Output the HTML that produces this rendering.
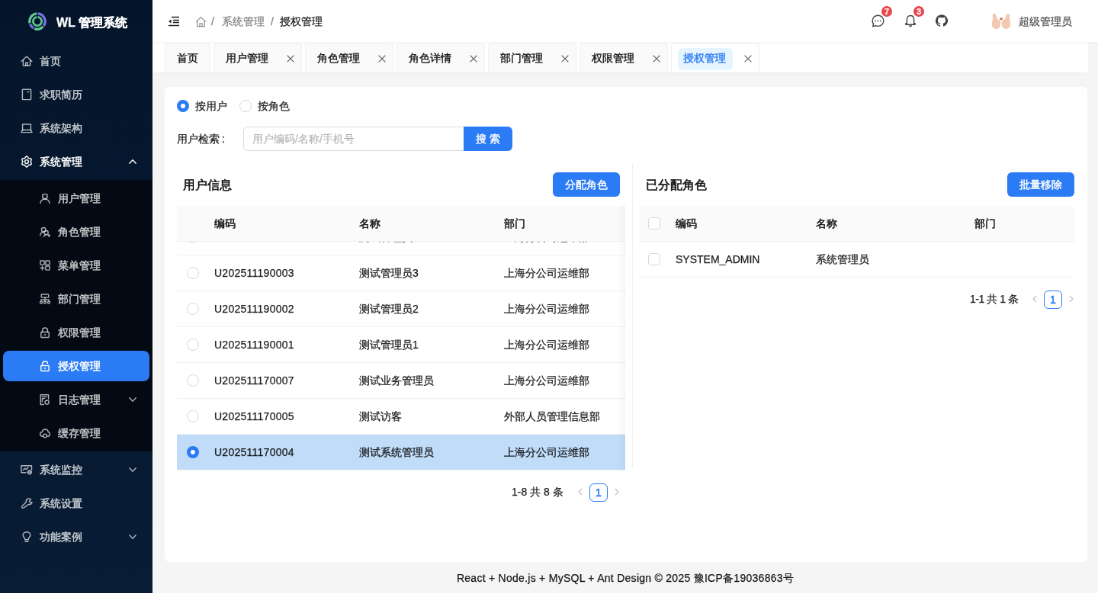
<!DOCTYPE html>
<html><head><meta charset="utf-8">
<style>
html,body{margin:0;padding:0;width:1098px;height:593px;overflow:hidden;background:#f5f5f5}
*{box-sizing:border-box}
#root{will-change:transform;-webkit-text-stroke:0.25px currentColor;position:absolute;left:0;top:0;width:1440px;height:778px;transform:scale(0.7625);transform-origin:0 0;font-family:"Liberation Sans",sans-serif;font-size:14px;color:rgba(0,0,0,0.88);background:#f5f5f5;overflow:hidden}
.abs{position:absolute}
.t{position:absolute;white-space:nowrap;line-height:22px;height:22px}
/* sidebar */
#side{position:absolute;left:0;top:0;width:200px;height:778px;background:linear-gradient(#04152b,#081c35)}
#sub{position:absolute;left:0;top:236px;width:200px;height:356px;background:#030a13}
.mi{position:absolute;left:4px;width:192px;height:40px;line-height:40px;color:rgba(255,255,255,0.67);font-size:14px;-webkit-text-stroke:0.45px currentColor}
.mi .ic{position:absolute;top:13px;width:14px;height:14px}
.mi .tx{position:absolute;top:0;white-space:nowrap}
.mi.top .ic{left:24px}.mi.top .tx{left:48px}
.mi.s .ic{left:48px}.mi.s .tx{left:72px}
.mi .ar{position:absolute;left:164.5px;top:16px;width:10px;height:8px}
.mi.open{color:#fff}
.mi.sel{background:#2b7bf4;border-radius:8px;color:#fff}
/* header */
#hdr{position:absolute;left:200px;top:0;width:1240px;height:55px;background:#fff;box-shadow:0 1px 3px rgba(0,0,0,0.06);z-index:2}
#tabs{position:absolute;left:200px;top:55px;width:1227px;height:40px;background:#fff;box-shadow:0 3px 5px rgba(0,0,0,0.025)}
.tab{-webkit-text-stroke:0.4px currentColor;position:absolute;top:2px;height:38px;background:#fafafa;border:1px solid #f0f0f0;border-bottom:none;border-radius:3px 3px 0 0;line-height:36px;font-size:14px;color:rgba(0,0,0,0.88)}
.badge{width:14px;height:14px;border-radius:7px;background:#e8474c;color:#fff;font-size:11px;line-height:14px;text-align:center;font-weight:bold;box-shadow:0 0 0 1px #fff}
.tab .x{position:absolute;left:94.5px;top:14px;width:10px;height:10px}
.tab.act{background:#fff}
.hl{left:8px;top:5px;width:72px;height:29px;background:#e6f4ff;border-radius:6px}
.inp{border:1px solid #d9d9d9;border-radius:6px 0 0 6px;background:#fff}
.ttl{font-size:16px;-webkit-text-stroke:0.6px currentColor;line-height:24px;height:24px}
.hd{-webkit-text-stroke:0.5px currentColor}
.row.sel{background:#c0dcf8}
.card{position:absolute;left:216px;top:114px;width:1209.5px;height:623px;background:#fff;border-radius:6px}
.th{position:absolute;height:47px;background:#fafafa;border-bottom:1px solid #f0f0f0;border-radius:2px 2px 0 0}
.row{position:absolute;height:47px;border-bottom:1px solid #f0f0f0}
.btn{-webkit-text-stroke:0.4px currentColor;position:absolute;height:32px;background:#2b7bf4;color:#fff;border-radius:6px;text-align:center;line-height:32px;font-size:14px}
.radio{position:absolute;width:16px;height:16px;border-radius:50%;border:1px solid #d9d9d9;background:#fff}
.radio.on{border:5px solid #2b7bf4}
.cb{position:absolute;width:16px;height:16px;border-radius:4px;border:1px solid #d9d9d9;background:#fff}
.pg{position:absolute;width:24px;height:24px;border:1px solid #2b7bf4;border-radius:6px;color:#2b7bf4;text-align:center;line-height:22px;font-size:14px;-webkit-text-stroke:0.6px currentColor}
.chev{position:absolute;color:rgba(0,0,0,0.25)}
</style></head>
<body><div id="root">

<div id="side">
  <div id="sub"></div>
  <!-- logo -->
  <svg class="abs" style="left:37px;top:16px" width="24" height="24" viewBox="0 0 24 24">
    <path d="M2.10 14.47 A10.2 10.2 0 0 1 11.29 1.82" fill="none" stroke="#62c792" stroke-width="3.3"/>
    <path d="M12.71 1.82 A10.2 10.2 0 0 1 20.25 18.00" fill="none" stroke="#7174e0" stroke-width="3.3"/>
    <path d="M19.46 18.96 A10.2 10.2 0 0 1 8.18 21.46" fill="none" stroke="#62c792" stroke-width="3.3"/>
    <path d="M7.05 20.92 A10.2 10.2 0 0 1 2.48 15.66" fill="none" stroke="#7174e0" stroke-width="3.3"/>
    <path d="M12.59 6.43 A5.6 5.6 0 1 1 11.41 6.43" fill="none" stroke="#5dbf8a" stroke-width="2.8"/>
  </svg>
  <div class="t" style="left:74px;top:18.5px;color:#fff;font-size:16px;font-weight:bold;-webkit-text-stroke:0.3px #fff">WL 管理系统</div>

  <div class="mi top" style="top:60px"><svg class="ic" viewBox="0 0 14 14" style="overflow:visible"><g fill="none" stroke="currentColor" stroke-width="1.45" stroke-linejoin="round" stroke-linecap="round"><path d="M0.2 7.4 L7 0.9 L13.8 7.4"/><path d="M2.4 5.6 V13 H11.6 V5.6"/><path d="M5.7 13 V9.3 H8.3 V13"/></g></svg><span class="tx">首页</span></div>
  <div class="mi top" style="top:104px"><svg class="ic" viewBox="0 0 14 14" style="overflow:visible"><g fill="none" stroke="currentColor" stroke-width="1.45" stroke-linejoin="round" stroke-linecap="round"><rect x="1.4" y="0.2" width="11.2" height="13.4" rx="0.8"/><path d="M7.6 3.6 H10"/></g></svg><span class="tx">求职简历</span></div>
  <div class="mi top" style="top:148px"><svg class="ic" viewBox="0 0 14 14" style="overflow:visible"><g fill="none" stroke="currentColor" stroke-width="1.45" stroke-linejoin="round" stroke-linecap="round"><path d="M1.6 9.4 V1.9 H12.4 V9.4"/><path d="M0 12.6 H14 L12.4 9.4 H1.6 Z"/></g></svg><span class="tx">系统架构</span></div>
  <div class="mi top open" style="top:192px"><svg class="ic" viewBox="0 0 14 14" style="overflow:visible"><g fill="none" stroke="currentColor" stroke-width="1.45" stroke-linejoin="round" stroke-linecap="round"><path d="M7.00 0.05 L7.71 0.26 L8.32 0.81 L8.78 1.51 L9.16 2.14 L9.57 2.54 L10.13 2.69 L10.86 2.71 L11.70 2.77 L12.48 3.02 L13.02 3.52 L13.19 4.24 L13.02 5.04 L12.65 5.80 L12.29 6.44 L12.15 7.00 L12.29 7.56 L12.65 8.20 L13.02 8.96 L13.19 9.76 L13.02 10.47 L12.48 10.98 L11.70 11.23 L10.86 11.29 L10.13 11.31 L9.57 11.46 L9.16 11.86 L8.78 12.49 L8.32 13.19 L7.71 13.74 L7.00 13.95 L6.29 13.74 L5.68 13.19 L5.22 12.49 L4.84 11.86 L4.42 11.46 L3.87 11.31 L3.14 11.29 L2.30 11.23 L1.52 10.98 L0.98 10.48 L0.81 9.76 L0.98 8.96 L1.35 8.20 L1.71 7.56 L1.85 7.00 L1.71 6.44 L1.35 5.80 L0.98 5.04 L0.81 4.24 L0.98 3.52 L1.52 3.02 L2.30 2.77 L3.14 2.71 L3.87 2.69 L4.42 2.54 L4.84 2.14 L5.22 1.51 L5.68 0.81 L6.29 0.26 Z"/><circle cx="7" cy="7" r="2.4"/></g></svg><span class="tx">系统管理</span><svg class="ar" viewBox="0 0 10 8" style="overflow:visible"><path d="M0.8 6.2 L5 1.8 L9.2 6.2" fill="none" stroke="currentColor" stroke-width="1.4" stroke-linecap="round" stroke-linejoin="round"/></svg></div>
  <div class="mi s" style="top:240px"><svg class="ic" viewBox="0 0 14 14" style="overflow:visible"><g fill="none" stroke="currentColor" stroke-width="1.45" stroke-linejoin="round" stroke-linecap="round"><circle cx="6.9" cy="4.6" r="3.2"/><path d="M0.9 13.3 C1.3 10.2 3.8 8.2 6.9 8.2 C10 8.2 12.5 10.2 12.9 13.3"/></g></svg><span class="tx">用户管理</span></div>
  <div class="mi s" style="top:284px"><svg class="ic" viewBox="0 0 14 14" style="overflow:visible"><g fill="none" stroke="currentColor" stroke-width="1.45" stroke-linejoin="round" stroke-linecap="round"><circle cx="5.2" cy="4.2" r="2.8"/><path d="M0.8 11.8 C1 9.4 2.6 7.6 4.6 7.2"/><circle cx="8.6" cy="8" r="2.6"/><path d="M5.3 13.4 C5.8 11.8 7 11 8.6 11"/><path d="M11 12 L12.2 10.8 L13.4 12 L12.2 13.2 Z"/></g></svg><span class="tx">角色管理</span></div>
  <div class="mi s" style="top:328px"><svg class="ic" viewBox="0 0 14 14" style="overflow:visible"><g fill="none" stroke="currentColor" stroke-width="1.45" stroke-linejoin="round" stroke-linecap="round"><rect x="0.9" y="0.9" width="5.2" height="5.2" rx="0.6"/><rect x="7.9" y="0.9" width="5.2" height="5.2" rx="0.6"/><rect x="7.9" y="7.9" width="5.2" height="5.2" rx="0.6"/><path d="M3.5 8 V13 M1 10.5 H6"/></g></svg><span class="tx">菜单管理</span></div>
  <div class="mi s" style="top:372px"><svg class="ic" viewBox="0 0 14 14" style="overflow:visible"><g fill="none" stroke="currentColor" stroke-width="1.45" stroke-linejoin="round" stroke-linecap="round"><rect x="2.2" y="0.9" width="9.6" height="4.2" rx="0.8"/><path d="M7 5.1 V8 M2 10 V8 H12 V10 M7 8 V10"/><circle cx="2" cy="11.6" r="1.5"/><circle cx="7" cy="11.6" r="1.5"/><circle cx="12" cy="11.6" r="1.5"/></g></svg><span class="tx">部门管理</span></div>
  <div class="mi s" style="top:416px"><svg class="ic" viewBox="0 0 14 14" style="overflow:visible"><g fill="none" stroke="currentColor" stroke-width="1.45" stroke-linejoin="round" stroke-linecap="round"><rect x="1.8" y="6.4" width="10.4" height="7" rx="0.6"/><path d="M3.6 6.4 V3.8 C3.6 2.1 5.1 1 7 1 C8.9 1 10.4 2.1 10.4 3.8 V6.4"/><path d="M6.2 9.9 H7.8"/></g></svg><span class="tx">权限管理</span></div>
  <div class="mi s sel" style="top:460px"><svg class="ic" viewBox="0 0 14 14" style="overflow:visible"><g fill="none" stroke="currentColor" stroke-width="1.45" stroke-linejoin="round" stroke-linecap="round"><rect x="1.8" y="6.4" width="10.4" height="7" rx="0.6"/><path d="M3.6 6.4 V3.8 C3.6 2.1 5.1 1 7 1 C8.9 1 10.4 2.1 10.4 3.6"/><path d="M6.2 9.9 H7.8"/></g></svg><span class="tx">授权管理</span></div>
  <div class="mi s" style="top:504px"><svg class="ic" viewBox="0 0 14 14" style="overflow:visible"><g fill="none" stroke="currentColor" stroke-width="1.45" stroke-linejoin="round" stroke-linecap="round"><path d="M5.3 13.4 H1.2 V0.8 H11.6 V6.2"/><path d="M3.4 3.4 H9 M3.4 5.6 H6.5 M3.4 5.6 V10"/><circle cx="9.6" cy="10.6" r="2.6"/></g></svg><span class="tx">日志管理</span><svg class="ar" viewBox="0 0 10 8" style="overflow:visible"><path d="M0.8 1.8 L5 6.2 L9.2 1.8" fill="none" stroke="currentColor" stroke-width="1.4" stroke-linecap="round" stroke-linejoin="round"/></svg></div>
  <div class="mi s" style="top:548px"><svg class="ic" viewBox="0 0 14 14" style="overflow:visible"><g fill="none" stroke="currentColor" stroke-width="1.45" stroke-linejoin="round" stroke-linecap="round"><path d="M3.8 11.2 C1.9 11.2 0.6 10 0.6 8.3 C0.6 6.8 1.7 5.7 3.2 5.5 C3.8 3.3 5.3 2 7.2 2 C9.3 2 10.9 3.4 11.2 5.5 C12.5 5.8 13.4 6.9 13.4 8.3 C13.4 9.8 12.3 11.2 10.5 11.2"/><circle cx="7" cy="10.4" r="2.3"/></g></svg><span class="tx">缓存管理</span></div>
  <div class="mi top" style="top:596px"><svg class="ic" viewBox="0 0 14 14" style="overflow:visible"><g fill="none" stroke="currentColor" stroke-width="1.45" stroke-linejoin="round" stroke-linecap="round"><path d="M6 10.7 H-0.1 V1.8 H13.5 V7"/><path d="M2.4 7.6 L4.6 5.2 L6.4 6.6 L9 4"/><circle cx="10.9" cy="10.3" r="2.4"/><circle cx="10" cy="10.3" r="0.35"/><circle cx="11.8" cy="10.3" r="0.35"/></g></svg><span class="tx">系统监控</span><svg class="ar" viewBox="0 0 10 8" style="overflow:visible"><path d="M0.8 1.8 L5 6.2 L9.2 1.8" fill="none" stroke="currentColor" stroke-width="1.4" stroke-linecap="round" stroke-linejoin="round"/></svg></div>
  <div class="mi top" style="top:640px"><svg class="ic" viewBox="0 0 14 14" style="overflow:visible"><g fill="none" stroke="currentColor" stroke-width="1.45" stroke-linejoin="round" stroke-linecap="round"><path d="M8.4 1.2 C10 0.6 11.5 0.9 12.6 2 L10.5 4.1 L11.1 5.9 L12.9 6.5 L14 5.4 C13.9 7.6 11.6 9.2 9.5 8.4 L3.2 13 C2.5 13.6 1.4 13.5 0.9 12.8 C0.4 12.2 0.5 11.3 1.1 10.8 L6.5 5.3 C6 3.7 6.8 2 8.4 1.2 Z"/></g></svg><span class="tx">系统设置</span></div>
  <div class="mi top" style="top:684px"><svg class="ic" viewBox="0 0 14 14" style="overflow:visible"><g fill="none" stroke="currentColor" stroke-width="1.45" stroke-linejoin="round" stroke-linecap="round"><path d="M4.7 10.7 V9.6 C4.7 8.6 2.2 7.4 2.2 4.9 C2.2 2.5 4.3 0.7 7 0.7 C9.7 0.7 11.8 2.5 11.8 4.9 C11.8 7.4 9.3 8.6 9.3 9.6 V10.7 Z"/><path d="M5 13.3 H9"/></g></svg><span class="tx">功能案例</span><svg class="ar" viewBox="0 0 10 8" style="overflow:visible"><path d="M0.8 1.8 L5 6.2 L9.2 1.8" fill="none" stroke="currentColor" stroke-width="1.4" stroke-linecap="round" stroke-linejoin="round"/></svg></div>
</div>

<div id="hdr">
  <svg class="abs" style="left:20px;top:20px" width="16" height="16" viewBox="0 0 16 16"><path d="M5 2.5 H15 M7 6.5 H15 M7 9.5 H15 M1 13.5 H15" stroke="#1f1f1f" stroke-width="1.6" fill="none"/><path d="M1 8 L4.5 5.5 V10.5 Z" fill="#1f1f1f"/></svg>
  <svg class="abs" style="left:56px;top:21px" width="15" height="15" viewBox="0 0 15 15"><path d="M1.2 7.6 L7.5 1.6 L13.8 7.6 M2.8 6.2 V13.6 H12.2 V6.2 M5.9 13.6 V9.8 H9.1 V13.6" fill="none" stroke="rgba(0,0,0,0.45)" stroke-width="1.2"/></svg>
  <div class="t" style="left:77px;top:17px;color:rgba(0,0,0,0.45)">/</div>
  <div class="t" style="left:91px;top:17px;color:rgba(0,0,0,0.45)">系统管理</div>
  <div class="t" style="left:155px;top:17px;color:rgba(0,0,0,0.45)">/</div>
  <div class="t" style="left:167px;top:17px;color:rgba(0,0,0,0.88)">授权管理</div>

  <svg class="abs" style="left:943px;top:19px" width="17" height="17" viewBox="0 0 17 17"><path d="M8.5 1.2 C12.6 1.2 15.8 4.3 15.8 8.3 C15.8 12.2 12.6 15.4 8.5 15.4 C7.4 15.4 6.3 15.1 5.3 14.7 L1.8 15.6 L2.6 12.5 C1.7 11.3 1.2 9.8 1.2 8.3 C1.2 4.3 4.4 1.2 8.5 1.2 Z" fill="none" stroke="rgba(0,0,0,0.75)" stroke-width="1.4"/><circle cx="5.2" cy="8.3" r="0.9" fill="rgba(0,0,0,0.75)"/><circle cx="8.5" cy="8.3" r="0.9" fill="rgba(0,0,0,0.75)"/><circle cx="11.8" cy="8.3" r="0.9" fill="rgba(0,0,0,0.75)"/></svg>
  <div class="abs badge" style="left:956px;top:8px">7</div>
  <svg class="abs" style="left:986px;top:19px" width="16" height="17" viewBox="0 0 16 17"><path d="M8 1.5 C5 1.5 3.4 3.8 3.4 6.5 V11.8 H2 V13.2 H14 V11.8 H12.6 V6.5 C12.6 3.8 11 1.5 8 1.5 Z M6.4 14.2 C6.6 15.2 7.2 15.8 8 15.8 C8.8 15.8 9.4 15.2 9.6 14.2" fill="none" stroke="rgba(0,0,0,0.75)" stroke-width="1.4"/></svg>
  <div class="abs badge" style="left:998px;top:8px">3</div>
  <svg class="abs" style="left:1027px;top:19px" width="16" height="16" viewBox="0 0 16 16"><path fill="rgba(0,0,0,0.75)" d="M8 0.2C3.6 0.2 0 3.8 0 8.2c0 3.5 2.3 6.5 5.5 7.6.4.1.5-.2.5-.4v-1.4c-2.2.5-2.7-1-2.7-1-.4-.9-.9-1.2-.9-1.2-.7-.5.1-.5.1-.5.8.1 1.2.8 1.2.8.7 1.2 1.9.9 2.3.7.1-.5.3-.9.5-1.1-1.8-.2-3.6-.9-3.6-4 0-.9.3-1.6.8-2.1-.1-.2-.4-1 .1-2.1 0 0 .7-.2 2.2.8.6-.2 1.3-.3 2-.3s1.4.1 2 .3c1.5-1 2.2-.8 2.2-.8.4 1.1.2 1.9.1 2.1.5.6.8 1.3.8 2.1 0 3.1-1.9 3.7-3.6 3.9.3.3.5.8.5 1.5v2.2c0 .2.1.5.6.4 3.2-1.1 5.5-4.1 5.5-7.6C16 3.8 12.4 0.2 8 0.2z"/></svg>
  <svg class="abs" style="left:1100px;top:16px" width="26" height="24" viewBox="0 0 26 24">
    <g fill="#f3c9b2" stroke="#e4ab92" stroke-width="0.6">
      <path d="M2.2 4.2 C2 2.4 4.6 1.6 5.6 3.2 L7.6 9.8 C9.4 9.6 11.6 10.8 11.8 13.6 C12 17.8 10.4 21.4 6.6 21.4 C3.2 21.4 1.2 18.6 1.3 14.8 C1.4 11.2 2.6 9.4 2.8 8.6 Z"/>
      <path d="M23.8 4.2 C24 2.4 21.4 1.6 20.4 3.2 L18.4 9.8 C16.6 9.6 14.4 10.8 14.2 13.6 C14 17.8 15.6 21.4 19.4 21.4 C22.8 21.4 24.8 18.6 24.7 14.8 C24.6 11.2 23.4 9.4 23.2 8.6 Z"/>
    </g>
    <path d="M11 8.2 C11 7 12.6 6.8 13 7.8 C13.4 6.8 15 7 15 8.2 C15 9.4 13 10.6 13 10.6 C13 10.6 11 9.4 11 8.2 Z" fill="#e2664e"/>
  </svg>
  <div class="t" style="left:1136px;top:17px;color:rgba(0,0,0,0.65)">超级管理员</div>
</div>
<div id="tabs">
  <div class="tab" style="left:16px;width:60px"><span class="abs" style="left:15px">首页</span></div>
  <div class="tab" style="left:80px;width:116px"><span class="abs" style="left:15px">用户管理</span><svg class="x" viewBox="0 0 10 10"><path d="M0.6 0.6 L9.4 9.4 M9.4 0.6 L0.6 9.4" stroke="rgba(0,0,0,0.6)" stroke-width="1.3"/></svg></div>
  <div class="tab" style="left:200px;width:116px"><span class="abs" style="left:15px">角色管理</span><svg class="x" viewBox="0 0 10 10"><path d="M0.6 0.6 L9.4 9.4 M9.4 0.6 L0.6 9.4" stroke="rgba(0,0,0,0.6)" stroke-width="1.3"/></svg></div>
  <div class="tab" style="left:320px;width:116px"><span class="abs" style="left:15px">角色详情</span><svg class="x" viewBox="0 0 10 10"><path d="M0.6 0.6 L9.4 9.4 M9.4 0.6 L0.6 9.4" stroke="rgba(0,0,0,0.6)" stroke-width="1.3"/></svg></div>
  <div class="tab" style="left:440px;width:116px"><span class="abs" style="left:15px">部门管理</span><svg class="x" viewBox="0 0 10 10"><path d="M0.6 0.6 L9.4 9.4 M9.4 0.6 L0.6 9.4" stroke="rgba(0,0,0,0.6)" stroke-width="1.3"/></svg></div>
  <div class="tab" style="left:560px;width:116px"><span class="abs" style="left:15px">权限管理</span><svg class="x" viewBox="0 0 10 10"><path d="M0.6 0.6 L9.4 9.4 M9.4 0.6 L0.6 9.4" stroke="rgba(0,0,0,0.6)" stroke-width="1.3"/></svg></div>
  <div class="tab act" style="left:680px;width:116px"><span class="abs hl"></span><span class="abs" style="left:15px;color:#2b7bf4">授权管理</span><svg class="x" viewBox="0 0 10 10"><path d="M0.6 0.6 L9.4 9.4 M9.4 0.6 L0.6 9.4" stroke="rgba(0,0,0,0.6)" stroke-width="1.3"/></svg></div>
</div>

<div class="card">
  <div class="radio on" style="left:16px;top:17px"></div><div class="t" style="left:40px;top:14px">按用户</div>
  <div class="radio" style="left:98px;top:17px"></div><div class="t" style="left:122px;top:14px">按角色</div>
  <div class="t" style="left:16px;top:57px">用户检索<span style="margin-left:3px">:</span></div>
  <div class="abs inp" style="left:103px;top:52px;width:290px;height:32px"><span class="t" style="left:11px;top:4px;color:rgba(0,0,0,0.25)">用户编码/名称/手机号</span></div>
  <div class="btn" style="left:392px;top:52px;width:64px;border-radius:0 6px 6px 0">搜 索</div>

  <div class="t ttl" style="left:24px;top:117px">用户信息</div>
  <div class="btn" style="left:509px;top:112px;width:88px">分配角色</div>

  <div class="abs" style="left:16px;top:156px;width:588px;height:348px;overflow:hidden">
    <div class="abs" style="left:0;top:47px;width:588px;height:300px;overflow:hidden">
<div class="row" style="left:0;top:-29px;width:588px"><div class="radio" style="left:13px;top:15px"></div><div class="t" style="left:49px;top:12px;letter-spacing:0.26px">U202511190004</div><div class="t" style="left:239px;top:12px">测试管理员4</div><div class="t" style="left:429px;top:12px">上海分公司运维部</div></div>
<div class="row" style="left:0;top:18px;width:588px"><div class="radio" style="left:13px;top:15px"></div><div class="t" style="left:49px;top:12px;letter-spacing:0.26px">U202511190003</div><div class="t" style="left:239px;top:12px">测试管理员3</div><div class="t" style="left:429px;top:12px">上海分公司运维部</div></div>
<div class="row" style="left:0;top:65px;width:588px"><div class="radio" style="left:13px;top:15px"></div><div class="t" style="left:49px;top:12px;letter-spacing:0.26px">U202511190002</div><div class="t" style="left:239px;top:12px">测试管理员2</div><div class="t" style="left:429px;top:12px">上海分公司运维部</div></div>
<div class="row" style="left:0;top:112px;width:588px"><div class="radio" style="left:13px;top:15px"></div><div class="t" style="left:49px;top:12px;letter-spacing:0.26px">U202511190001</div><div class="t" style="left:239px;top:12px">测试管理员1</div><div class="t" style="left:429px;top:12px">上海分公司运维部</div></div>
<div class="row" style="left:0;top:159px;width:588px"><div class="radio" style="left:13px;top:15px"></div><div class="t" style="left:49px;top:12px;letter-spacing:0.26px">U202511170007</div><div class="t" style="left:239px;top:12px">测试业务管理员</div><div class="t" style="left:429px;top:12px">上海分公司运维部</div></div>
<div class="row" style="left:0;top:206px;width:588px"><div class="radio" style="left:13px;top:15px"></div><div class="t" style="left:49px;top:12px;letter-spacing:0.26px">U202511170005</div><div class="t" style="left:239px;top:12px">测试访客</div><div class="t" style="left:429px;top:12px">外部人员管理信息部</div></div>
<div class="row sel" style="left:0;top:253px;width:588px"><div class="radio on" style="left:13px;top:15px"></div><div class="t" style="left:49px;top:12px;letter-spacing:0.26px">U202511170004</div><div class="t" style="left:239px;top:12px">测试系统管理员</div><div class="t" style="left:429px;top:12px">上海分公司运维部</div></div>
    </div>
    <div class="abs" style="left:578px;top:0px;width:10px;height:347px;z-index:3;background:linear-gradient(to right,rgba(0,0,0,0),rgba(0,0,0,0.035))"></div>
    <div class="th" style="left:0;top:0;width:588px"><div class="t hd" style="left:49px;top:12px">编码</div><div class="t hd" style="left:239px;top:12px">名称</div><div class="t hd" style="left:429px;top:12px">部门</div></div>
  </div>
  <div class="t" style="left:455px;top:520px">1-8 共 8 条</div>
  <svg class="abs" style="left:541px;top:526px" width="8" height="10" viewBox="0 0 8 10"><path d="M6 1 L2 5 L6 9" fill="none" stroke="rgba(0,0,0,0.25)" stroke-width="1.2"/></svg>
  <div class="pg" style="left:557px;top:520px">1</div>
  <svg class="abs" style="left:589px;top:526px" width="8" height="10" viewBox="0 0 8 10"><path d="M2 1 L6 5 L2 9" fill="none" stroke="rgba(0,0,0,0.25)" stroke-width="1.2"/></svg>

  <div class="abs" style="left:613px;top:100px;width:1px;height:399px;background:#f0f0f0"></div>

  <div class="t ttl" style="left:631px;top:117px">已分配角色</div>
  <div class="btn" style="left:1105px;top:112px;width:88px">批量移除</div>
  <div class="th" style="left:622px;top:156px;width:571px"><div class="cb" style="left:12px;top:15px"></div><div class="t hd" style="left:48px;top:12px">编码</div><div class="t hd" style="left:232px;top:12px">名称</div><div class="t hd" style="left:440px;top:12px">部门</div></div>
  <div class="row" style="left:622px;top:203px;width:571px"><div class="cb" style="left:12px;top:15px"></div><div class="t" style="left:48px;top:12px">SYSTEM_ADMIN</div><div class="t" style="left:232px;top:12px">系统管理员</div></div>
  <div class="t" style="left:1056px;top:267px;letter-spacing:-0.45px">1-1 共 1 条</div>
  <svg class="abs" style="left:1137px;top:273px" width="8" height="10" viewBox="0 0 8 10"><path d="M6 1 L2 5 L6 9" fill="none" stroke="rgba(0,0,0,0.25)" stroke-width="1.2"/></svg>
  <div class="pg" style="left:1153px;top:267px">1</div>
  <svg class="abs" style="left:1185px;top:273px" width="8" height="10" viewBox="0 0 8 10"><path d="M2 1 L6 5 L2 9" fill="none" stroke="rgba(0,0,0,0.25)" stroke-width="1.2"/></svg>
</div>

<div class="t" style="left:200px;width:1240px;text-align:center;top:747px;letter-spacing:0.27px">React + Node.js + MySQL + Ant Design © 2025 豫ICP备19036863号</div>

</div></body></html>
